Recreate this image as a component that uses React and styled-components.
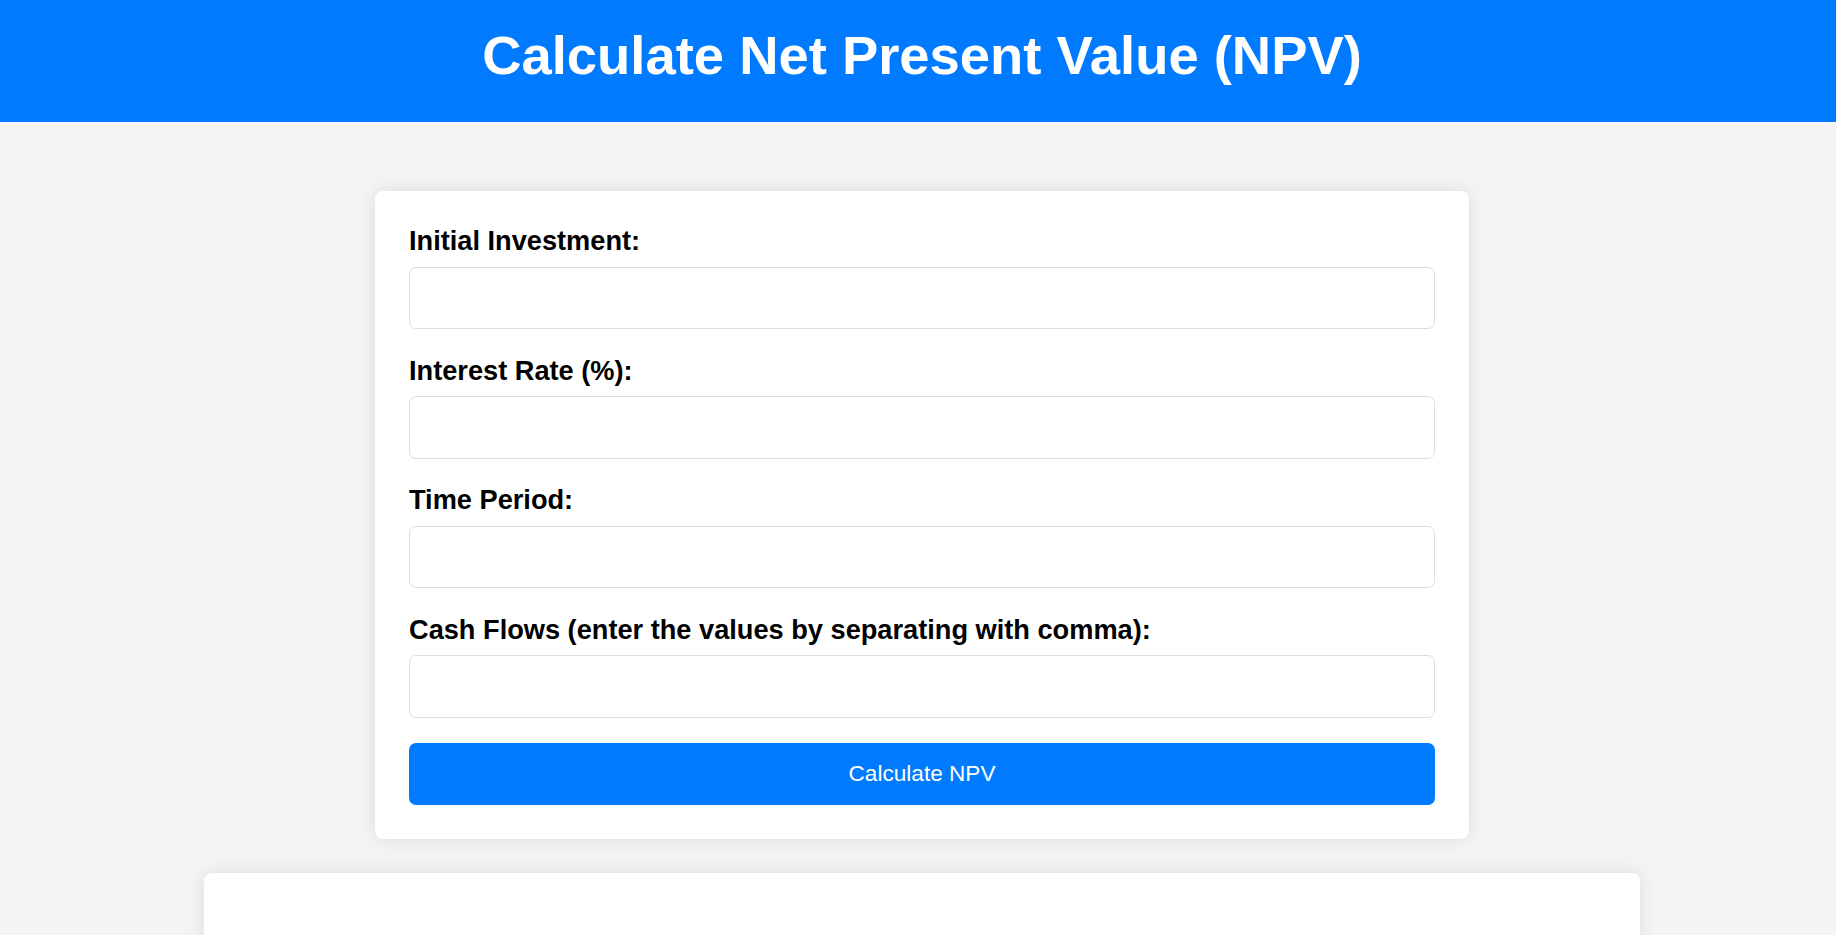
import React, { useState } from 'react';
import styled, { createGlobalStyle } from 'styled-components';

const GlobalStyle = createGlobalStyle`
  html, body {
    margin: 0;
    padding: 0;
    background-color: #f4f4f4;
    font-family: "Liberation Sans", Arial, sans-serif;
  }
  * {
    box-sizing: border-box;
  }
`;

const Header = styled.header`
  background-color: #007bff;
  color: white;
  text-align: center;
  height: 122px;
  padding: 24px 0 0 8px;
`;

const Title = styled.h1`
  margin: 0;
  font-size: 54.4px;
  font-weight: bold;
  line-height: normal;
`;

const Main = styled.main`
  padding-left: 8px;
`;

const Card = styled.form`
  width: ${(p) => p.width}px;
  margin: ${(p) => p.top}px auto 0;
  padding: 34px;
  background-color: white;
  border-radius: 8px;
  box-shadow: 0 0 17px rgba(0, 0, 0, 0.1);
  min-height: ${(p) => p.minHeight || 0}px;
`;

const Label = styled.label`
  display: block;
  font-size: 27.2px;
  font-weight: bold;
  line-height: normal;
  color: #000;
  margin-bottom: 9.5px;
`;

const Input = styled.input`
  display: block;
  width: 100%;
  height: 62.6px;
  padding: 0 17px;
  margin-bottom: 25.5px;
  border: 1px solid #ddd;
  border-radius: 7px;
  font-family: "Liberation Sans", Arial, sans-serif;
  font-size: 22.6px;
  background: white;
  outline: none;
`;

const Button = styled.button`
  display: block;
  width: 100%;
  height: 61.5px;
  border: none;
  border-radius: 7px;
  background-color: #007bff;
  color: white;
  font-family: "Liberation Sans", Arial, sans-serif;
  font-size: 22.6px;
  cursor: pointer;
`;

const fields = [
  { id: 'initial', label: 'Initial Investment:' },
  { id: 'rate', label: 'Interest Rate (%):' },
  { id: 'period', label: 'Time Period:' },
  { id: 'flows', label: 'Cash Flows (enter the values by separating with comma):' },
];

const App = () => {
  const [values, setValues] = useState({});

  const onChange = (e) => {
    setValues({ ...values, [e.target.name]: e.target.value });
  };

  return (
    <>
      <GlobalStyle />
      <Header>
        <Title>Calculate Net Present Value (NPV)</Title>
      </Header>

      <Main>
        <Card width={1094} top={69} onSubmit={(e) => e.preventDefault()}>
          {fields.map((f) => (
            <div key={f.id}>
              <Label htmlFor={f.id}>{f.label}</Label>
              <Input
                id={f.id}
                name={f.id}
                type='text'
                value={values[f.id] || ''}
                onChange={onChange}
              />
            </div>
          ))}
          <Button type='submit'>Calculate NPV</Button>
        </Card>

        {/* 결과 영역 */}
        <Card as='div' width={1436} top={34} minHeight={120} />
      </Main>
    </>
  );
};

export default App;
